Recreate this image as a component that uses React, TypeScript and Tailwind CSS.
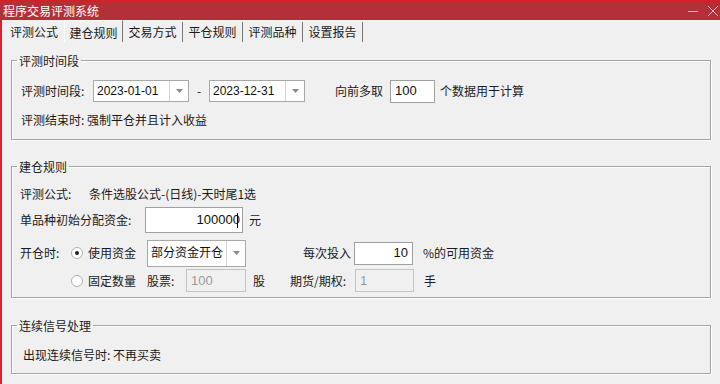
import React from "react";

const font = { fontFamily: '"Noto Sans CJK SC", "Liberation Sans", sans-serif' };

const Combo = ({ value, w }: { value: string; w: string }) => (
	<div className={`flex h-[22px] ${w} items-stretch border border-[#a8a8a8] bg-white`}>
		<div className="flex flex-1 items-center pl-[3px] text-[12px] text-[#111] [font-family:'Liberation_Sans','Noto_Sans_CJK_SC',sans-serif]">
			{value}
		</div>
		<div className="flex w-[19px] items-center justify-center border-l border-[#d4d4d4]">
			<svg width="7" height="4" viewBox="0 0 7 4">
				<path d="M0 0h7L3.5 4z" fill="#8a8a8a" />
			</svg>
		</div>
	</div>
);

const Radio = ({ checked }: { checked?: boolean }) => (
	<div className="flex h-[12px] w-[12px] items-center justify-center rounded-full border border-[#b0b0b0] bg-white">
		{checked && <div className="h-[4px] w-[4px] rounded-full bg-[#222]" />}
	</div>
);

const Input = ({
	value,
	w,
	h = "h-[22px]",
	right,
	disabled,
	caret,
}: {
	value: string;
	w: string;
	h?: string;
	right?: boolean;
	disabled?: boolean;
	caret?: boolean;
}) => (
	<div
		className={`flex ${h} ${w} items-center border px-[4px] text-[13px] [font-family:'Liberation_Sans',sans-serif] ${
			right ? "justify-end" : "justify-start"
		} ${disabled ? "border-[#c4c4c4] bg-[#f0f0f0] text-[#9a9a9a]" : "border-[#a0a0a0] bg-white text-[#111]"}`}
	>
		{value}
		{caret && <span className="ml-[-3px] inline-block h-[15px] w-px bg-black" />}
	</div>
);

const Group = ({ title, className, children }: { title: string; className: string; children: React.ReactNode }) => (
	<fieldset className={`mx-[9px] border border-[#a4a4a4] shadow-[inset_1px_1px_0_#fff,1px_1px_0_#fff] ${className}`}>
		<legend className="ml-[5px] px-[2px] text-[12px] leading-[17px] text-[#222]">{title}</legend>
		{children}
	</fieldset>
);

const tabs = ["评测公式", "建仓规则", "交易方式", "平仓规则", "评测品种", "设置报告"];

export default function App() {
	return (
		<div className="flex h-[384px] w-[720px] flex-col overflow-hidden bg-[#f0f0f0] text-[12px] text-[#1a1a1a]" style={font}>
			{/* title bar */}
			<div className="flex h-[20px] shrink-0 items-center justify-between border-t-[2px] border-[#d42029] bg-[#b33038] pl-[3px] pr-[2px] text-white">
				<span className="text-[12px] leading-none">程序交易评测系统</span>
				<div className="flex items-center gap-[10px]">
					<svg width="10" height="10" viewBox="0 0 10 10">
						<path d="M0 5.5h10" stroke="#f2b8bb" strokeWidth="1" />
					</svg>
					<svg width="10" height="10" viewBox="0 0 10 10">
						<path d="M0 0l10 10M10 0L0 10" stroke="#f2b8bb" strokeWidth="1" />
					</svg>
				</div>
			</div>

			<div className="flex flex-1 flex-col border-l-[2px] border-[#d8232c]">
				{/* tabs */}
				<div className="flex h-[22px] items-end pl-[2px]">
					{tabs.map((t, i) =>
						i === 1 ? (
							<div
								key={t}
								className="flex h-[22px] w-[59px] items-start justify-center border-l border-r border-t border-l-white border-r-[#777] border-t-white pt-[3px] text-[12px]"
							>
								{t}
							</div>
						) : (
							<div
								key={t}
								className={`flex h-[20px] w-[60px] items-center justify-center text-[12px] ${i === 0 ? "" : "border-r border-[#777]"}`}
							>
								{t}
							</div>
						)
					)}
				</div>

				{/* time period */}
				<Group title="评测时间段" className="mt-[10px] h-[88px]">
					<div className="mt-[11px] flex h-[22px] items-center pl-[9px]">
						<span className="w-[72px]">评测时间段:</span>
						<Combo value="2023-01-01" w="w-[96px]" />
						<span className="w-[20px] text-center">-</span>
						<Combo value="2023-12-31" w="w-[96px]" />
						<span className="ml-[30px] w-[55px]">向前多取</span>
						<Input value="100" w="w-[45px]" h="h-[23px]" />
						<span className="ml-[5px]">个数据用于计算</span>
					</div>
					<div className="mt-[9px] pl-[9px]">评测结束时: 强制平仓并且计入收益</div>
				</Group>

				{/* open rules */}
				<Group title="建仓规则" className="mt-[18px] h-[140px]">
					<div className="mt-[10px] flex h-[18px] items-center pl-[8px]">
						<span className="w-[69px]">评测公式:</span>
						<span>条件选股公式-(日线)-天时尾1选</span>
					</div>
					<div className="mt-[4px] flex h-[26px] items-center pl-[8px]">
						<span className="w-[125px]">单品种初始分配资金:</span>
						<Input value="100000" w="w-[98px]" h="h-[26px]" right caret />
						<span className="ml-[6px]">元</span>
					</div>
					<div className="mt-[7px] flex h-[26px] items-center pl-[8px]">
						<span className="w-[51px]">开仓时:</span>
						<Radio checked />
						<span className="ml-[5px] w-[59px]">使用资金</span>
						<Combo value="部分资金开仓" w="w-[99px] h-[27px]" />
						<span className="ml-[57px] w-[51px]">每次投入</span>
						<Input value="10" w="w-[59px]" h="h-[23px]" right />
						<span className="ml-[10px]">%的可用资金</span>
					</div>
					<div className="mt-[3px] flex h-[23px] items-center pl-[59px]">
						<Radio />
						<span className="ml-[5px] w-[59px]">固定数量</span>
						<span className="w-[39px]">股票:</span>
						<Input value="100" w="w-[60px]" h="h-[23px]" disabled />
						<span className="ml-[7px] w-[37px]">股</span>
						<span className="w-[65px]">期货/期权:</span>
						<Input value="1" w="w-[59px]" h="h-[23px]" disabled />
						<span className="ml-[10px]">手</span>
					</div>
				</Group>

				{/* continuous signal */}
				<Group title="连续信号处理" className="mt-[19px] h-[57px]">
					<div className="mt-[12px] pl-[11px]">出现连续信号时: 不再买卖</div>
				</Group>
			</div>
		</div>
	);
}
